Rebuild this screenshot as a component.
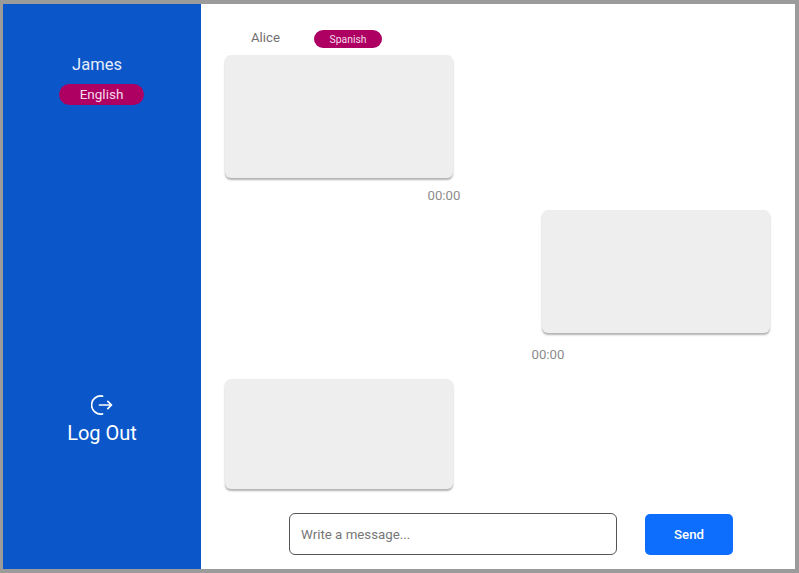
<div class="frame">
  <aside class="sidebar">
    <div class="user">
      <div class="name">James</div>
      <div class="lang-pill">English</div>
    </div>
    <button class="logout">
      <svg width="22" height="22" viewBox="0 0 22 22" fill="none" stroke="#fff" stroke-width="1.7" stroke-linecap="round" stroke-linejoin="round">
        <path d="M11.5 2.2 A9 9 0 1 0 11.5 19.8" />
        <path d="M8.5 11 H20.5 M16.8 7.3 L20.5 11 L16.8 14.7" />
      </svg>
      <span>Log Out</span>
    </button>
  </aside>
  <main class="chat">
    <header class="head">
      <span class="peer">Alice</span>
      <span class="peer-lang">Spanish</span>
    </header>
    <div class="bubble first"></div>
    <div class="time t1">00:00</div>
    <div class="bubble mine"></div>
    <div class="time t2">00:00</div>
    <div class="bubble last"></div>
    <form class="composer">
      <input class="field" placeholder="Write a message..." />
      <button type="button" class="send">Send</button>
    </form>
  </main>
</div>

<style>
  :global(body) {
    margin: 0;
    font-family: Roboto, "Liberation Sans", sans-serif;
  }
  .frame {
    box-sizing: border-box;
    width: 799px;
    height: 573px;
    display: flex;
    background: #fff;
    border-style: solid;
    border-color: #9b9b9b;
    border-width: 4px 4px 4px 3px;
  }
  .sidebar {
    box-sizing: border-box;
    width: 198px;
    flex: none;
    background: #0b57c9;
    color: #fff;
    display: flex;
    flex-direction: column;
    align-items: center;
    justify-content: space-between;
    padding: 51px 0 124px;
  }
  .user {
    display: flex;
    flex-direction: column;
    align-items: center;
  }
  .name {
    font-size: 16.5px;
    line-height: 20px;
    color: #e6edfb;
    margin-left: -10px;
  }
  .lang-pill {
    margin-top: 9px;
    margin-left: -2px;
    width: 85px;
    height: 21px;
    box-sizing: border-box;
    border-radius: 11px;
    background: #ad0062;
    color: #f7dcea;
    font-size: 13.5px;
    line-height: 21px;
    text-align: center;
    padding-left: 1px;
  }
  .logout {
    display: flex;
    flex-direction: column;
    align-items: center;
    gap: 5px;
    background: none;
    border: 0;
    padding: 0;
    color: #fff;
    font: inherit;
    font-size: 20px;
    line-height: 24px;
  }
  .chat {
    flex: 1;
    min-width: 0;
    position: relative;
    display: flex;
    flex-direction: column;
    align-items: flex-start;
    padding: 25px 25px 0 24px;
    box-sizing: border-box;
  }
  .head {
    display: flex;
    align-items: center;
    height: 19px;
    margin-left: 26px;
    width: 100%;
  }
  .peer {
    font-size: 13.2px;
    color: #6f6f6f;
    width: 63px;
    margin-top: -2px;
  }
  .peer-lang {
    width: 68px;
    height: 18px;
    border-radius: 9px;
    background: #ad0062;
    color: #f7dcea;
    font-size: 10.4px;
    line-height: 19px;
    text-align: center;
  }
  .bubble {
    width: 228px;
    height: 123px;
    flex: none;
    background: #eeeeee;
    border-radius: 6px;
    box-shadow: 0 2px 2px rgba(0, 0, 0, 0.3);
  }
  .first { margin-top: 7px; }
  .mine {
    align-self: flex-end;
    margin-top: 6px;
  }
  .last {
    height: 110px;
    margin-top: 16px;
  }
  .time {
    font-size: 13.2px;
    line-height: 16px;
    color: #8c8c8c;
  }
  .t1 {
    margin-top: 10px;
    margin-left: 202.5px;
  }
  .t2 {
    margin-top: 14px;
    margin-left: 306.5px;
  }
  .composer {
    display: flex;
    align-items: center;
    margin: 24px 0 0 64px;
  }
  .field {
    box-sizing: border-box;
    width: 328px;
    height: 42px;
    border: 1px solid #555;
    border-radius: 6px;
    padding: 0 11px;
    font: inherit;
    font-size: 13.3px;
    outline: none;
    background: #fff;
  }
  .field::placeholder {
    color: #777;
    opacity: 1;
  }
  .send {
    margin-left: 28px;
    width: 88px;
    height: 41px;
    border: 0;
    border-radius: 5px;
    background: #0d6efd;
    color: #fff;
    font: inherit;
    font-size: 13.2px;
    font-weight: 500;
  }
</style>
